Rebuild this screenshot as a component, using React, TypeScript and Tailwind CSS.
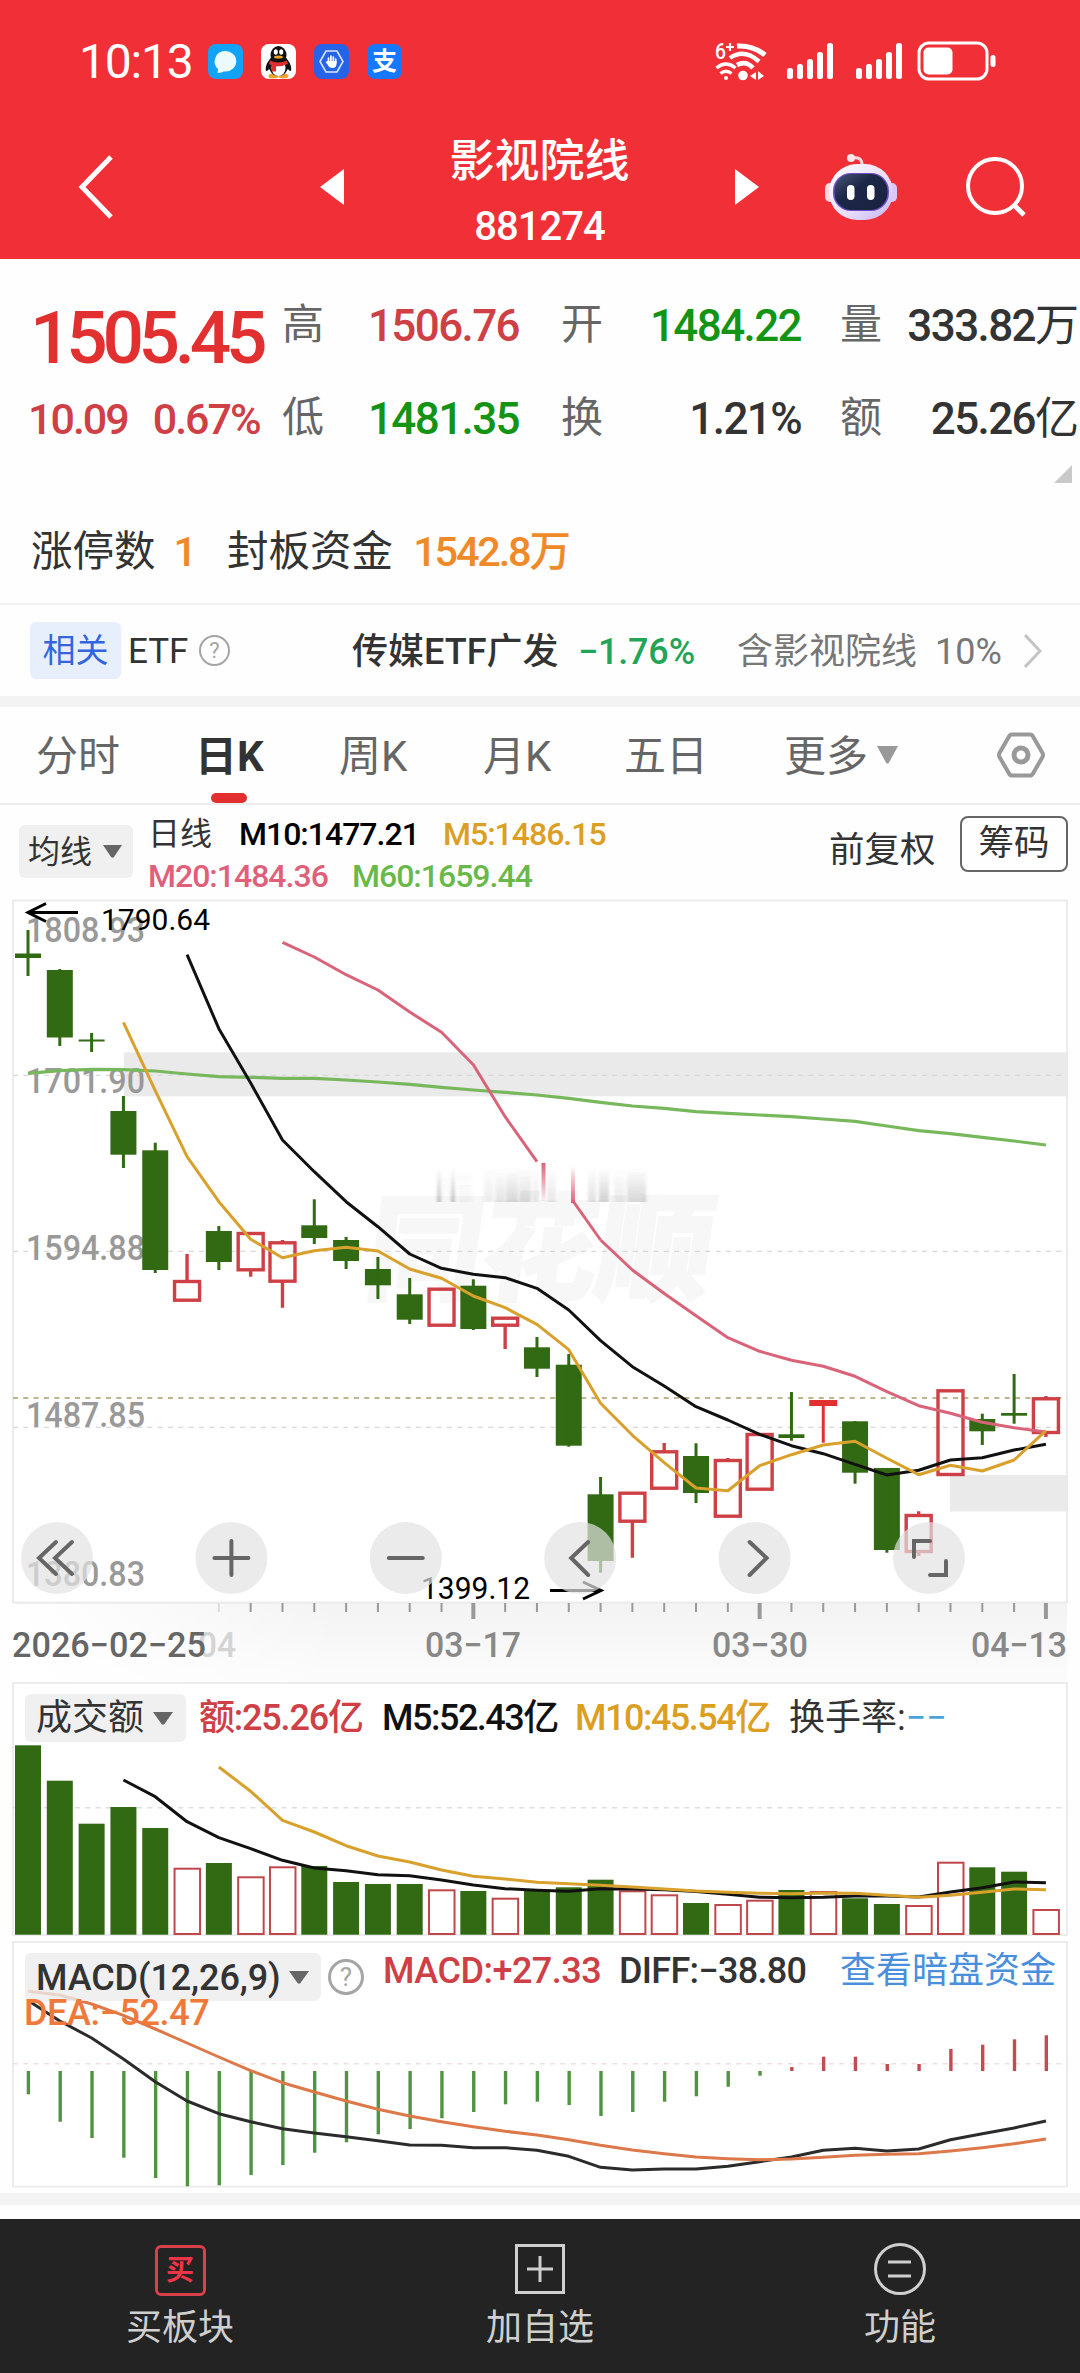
import React from "react";
import clsx from "clsx";

interface Candle {
  up?: boolean;
  solid?: boolean;
  top: number;
  bottom: number;
  high: number;
  low: number;
}

const RED = "#cf4046";
const GREEN = "#326a14";

const STEP = 31.81;
const xAt = (i: number) => 28 + i * STEP;

// [direction, body top, body bottom, high, low]
const RAW_CANDLES: [string, number, number, number, number][] = [
  ["d", 953.5, 958, 930, 976],
  ["d", 970, 1037.5, 969, 1046],
  ["d", 1039.5, 1041.5, 1033, 1052],
  ["d", 1111, 1154.7, 1096, 1168],
  ["d", 1150.3, 1270, 1142.7, 1273],
  ["u", 1280, 1301.7, 1254, 1301],
  ["d", 1231, 1262, 1226, 1270],
  ["u", 1232, 1271.3, 1232, 1276.7],
  ["u", 1241.3, 1282.7, 1240, 1307.7],
  ["d", 1225.3, 1238, 1199.3, 1244],
  ["d", 1240, 1261, 1237, 1269],
  ["d", 1269, 1285.3, 1257, 1299],
  ["d", 1294.3, 1319.7, 1278, 1324],
  ["u", 1287.7, 1326.7, 1288, 1326],
  ["d", 1285.7, 1329, 1279.3, 1330],
  ["u", 1316.7, 1326.7, 1317, 1349],
  ["d", 1347.3, 1368.7, 1337, 1377],
  ["d", 1364.7, 1445.7, 1354, 1446.7],
  ["d", 1494.3, 1561, 1477, 1572.7],
  ["u", 1491.7, 1522.7, 1492, 1557.7],
  ["u", 1450.3, 1489.7, 1443, 1489],
  ["d", 1456, 1493, 1443.3, 1503],
  ["u", 1459, 1517.7, 1458, 1517],
  ["u", 1433, 1490.7, 1433, 1490],
  ["d", 1434.3, 1438, 1392, 1440.7],
  ["s", 1400, 1406, 1400, 1442.7],
  ["d", 1421.3, 1472.7, 1421, 1483.7],
  ["d", 1468, 1550, 1468, 1552.7],
  ["u", 1514, 1553, 1511.3, 1556],
  ["u", 1389.3, 1476, 1390, 1476],
  ["d", 1419, 1431.3, 1413.7, 1445],
  ["d", 1413, 1415.7, 1374, 1423.7],
  ["u", 1397.3, 1434, 1396, 1437],
];

const CANDLES: Candle[] = RAW_CANDLES.map(([kind, top, bottom, high, low]) => ({
  up: kind !== "d",
  solid: kind === "s",
  top,
  bottom,
  high,
  low,
}));

const MA5 = [1022.3, 1090.7, 1156.7, 1201.7, 1239.3, 1257.7, 1250.7, 1247.3, 1251, 1269, 1278.3, 1296, 1307.7, 1324.3, 1349.7, 1403.3, 1435.3, 1462.7, 1488, 1490.7, 1465.7, 1454.7, 1445, 1441.3, 1458.3, 1474.7, 1465.3, 1471, 1460, 1430.7];
const MA10 = [954.7, 1028.7, 1083, 1140, 1171.7, 1201.7, 1226.7, 1254, 1268.3, 1274.3, 1277.7, 1288.3, 1310, 1340.7, 1366.7, 1386, 1406.7, 1420, 1434.3, 1445.7, 1453.7, 1464.3, 1475, 1470.3, 1460, 1457.7, 1450, 1444.3];
const MA20_LEFT = [942.3, 957, 974.7, 990, 1012, 1032.3, 1064.7, 1116.7, 1161.7];
const MA20_RIGHT = [1240, 1270, 1293.5, 1315.7, 1337.7, 1351.3, 1360.3, 1366.3, 1376.3, 1391.7, 1405.7, 1413.3, 1422.3, 1427.7, 1432];
const MA60 = [1073.3, 1070.7, 1069.3, 1069.7, 1071, 1074, 1076.7, 1077.3, 1078.3, 1078.3, 1080, 1082, 1084.3, 1087.3, 1090, 1092.3, 1095, 1098.3, 1102.3, 1106, 1108.3, 1111.7, 1113.3, 1115, 1116.7, 1119, 1121.3, 1126, 1130.7, 1133.7, 1137.3, 1141, 1145];

const VOLUME_TOPS = [1745.3, 1780.7, 1823.7, 1807, 1828, 1867.7, 1863, 1876.3, 1866.3, 1866, 1882, 1884, 1884, 1889.3, 1891, 1897.7, 1891, 1887.3, 1879.7, 1890.3, 1894.3, 1903, 1904, 1899.7, 1890, 1891, 1898.3, 1904, 1905, 1861.7, 1867.3, 1871.7, 1909];
const VOL5 = [1780, 1796.7, 1821.7, 1837.7, 1848.7, 1860.3, 1868, 1870.7, 1874.7, 1875.7, 1880, 1885, 1888.7, 1890.3, 1891.3, 1888.7, 1889, 1889.7, 1891.5, 1894.3, 1897.3, 1897.7, 1897.3, 1896, 1896, 1897, 1892, 1887.7, 1882, 1882.8];
const VOL10 = [1767, 1791.3, 1820.3, 1832, 1845.7, 1856, 1862, 1870, 1876.3, 1879, 1882.3, 1883.7, 1885.3, 1887, 1889, 1891, 1892.3, 1893.3, 1893.7, 1893, 1893.3, 1895.3, 1897.3, 1895.3, 1892.3, 1889, 1889.7];

const MACD_BASE = 2071;
const MACD_ENDS = [2094.3, 2121.7, 2138, 2157.7, 2178, 2186.3, 2185.3, 2175, 2165, 2152.7, 2142.3, 2134.3, 2129, 2118.3, 2112, 2104.3, 2101.7, 2105, 2116, 2112, 2101.7, 2096.3, 2086.7, 2075.7, 2067, 2056.7, 2056.7, 2064, 2064, 2049, 2044.7, 2039.3, 2035.3];
const DIFF = [2000.5, 2021, 2038, 2059, 2081.7, 2101, 2113.7, 2121.7, 2128.7, 2133, 2136.7, 2140.7, 2145, 2145.3, 2147.7, 2147.7, 2150.3, 2156.3, 2167.3, 2170, 2169, 2169, 2166.3, 2161.7, 2157, 2150.3, 2148.3, 2151, 2149, 2139.7, 2133.7, 2128, 2121];
const DEA = [1991.3, 1995, 2004, 2015.3, 2029, 2043, 2057, 2070.7, 2082.7, 2092, 2101, 2109.3, 2116, 2121.7, 2126.7, 2131.3, 2135, 2139.7, 2145.3, 2150, 2153.7, 2157, 2158.7, 2159.7, 2159, 2157.3, 2155.3, 2154.3, 2153.7, 2151, 2147.7, 2143.7, 2139];

const toPoints = (values: number[], from: number) =>
  values.map((y, i) => `${xAt(from + i)},${y}`).join(" ");

interface LineProps {
  values: number[];
  from: number;
  color: string;
  width?: number;
}

const Line: React.FC<LineProps> = ({ values, from, color, width = 3 }) => (
  <polyline points={toPoints(values, from)} fill="none" stroke={color} strokeWidth={width} strokeLinejoin="round" />
);

const Caret: React.FC<{ className?: string }> = ({ className = "h-[13px] w-[20px] fill-[#666]" }) => (
  <svg viewBox="0 0 20 13" preserveAspectRatio="none" className={className}>
    <path d="M0 0h20L11.5 12Q10 13.6 8.5 12z" />
  </svg>
);

const HelpIcon: React.FC<{ className?: string }> = ({ className }) => (
  <span
    className={clsx(
      "flex items-center justify-center rounded-full border-[#a5a5a5] leading-none text-[#a5a5a5]",
      className
    )}
  >
    ?
  </span>
);

const Signal: React.FC = () => (
  <svg viewBox="0 0 46 36" className="h-9 w-[46px] fill-white">
    <rect x="0" y="25" width="6" height="11" rx="2.5" />
    <rect x="10" y="21" width="6" height="15" rx="2.5" />
    <rect x="20" y="16" width="6" height="20" rx="2.5" />
    <rect x="30" y="9" width="6" height="27" rx="2.5" />
    <rect x="40" y="0" width="6" height="36" rx="2.5" />
  </svg>
);

const StatusBar: React.FC = () => (
  <div className="flex h-[122px] items-center pl-[79px]">
    <span className="w-[129px] pt-[2px] text-[48px] leading-none tracking-[-1.2px]">10:13</span>
    <div className="flex gap-[18px]">
      <svg viewBox="0 0 35 35" className="size-[35px]">
        <rect width="35" height="35" rx="8" fill="#12a3f6" />
        <path d="M17.500 7a10.500 10 0 0 1 0 20.500c-2 0-3 0-4 1l-4 .5 .5-4A10.400 10.400 0 0 1 17.500 7z" fill="#eafaff" />
      </svg>
      <svg viewBox="0 0 35 35" className="size-[35px]">
        <rect width="35" height="35" rx="8" fill="#fff" />
        <ellipse cx="12.500" cy="32" rx="5" ry="2.500" fill="#eda32c" />
        <ellipse cx="22.500" cy="32" rx="5" ry="2.500" fill="#eda32c" />
        <path d="M10 14c-4 4-6 9-5 13 2 0 3-2 3-2l19 0s1 2 3 2c1-4-1-9-5-13z" fill="#111" />
        <ellipse cx="17.500" cy="21" rx="10" ry="11" fill="#111" />
        <ellipse cx="17.500" cy="24" rx="7" ry="8" fill="#fff" />
        <ellipse cx="17.500" cy="11" rx="8" ry="9" fill="#111" />
        <ellipse cx="14.800" cy="8" rx="2" ry="2.800" fill="#fff" />
        <ellipse cx="20.200" cy="8" rx="2" ry="2.800" fill="#fff" />
        <ellipse cx="17.500" cy="13" rx="4.500" ry="1.600" fill="#f0a52a" />
        <path d="M9 16.500q8.500 4 17 0l1 3.500q-6 2.500-12 2.500v5h-4v-6l-3-1.500z" fill="#dd3030" />
      </svg>
      <svg viewBox="0 0 35 35" className="size-[35px]">
        <rect width="35" height="35" rx="8" fill="#2563e8" />
        <path d="M12 7h11l6 10.500L23 28H12L6 17.500z" fill="none" stroke="#dce8ff" strokeWidth="1.600" />
        <path d="M14.500 18v-4m2.400 4v-6m2.400 6v-5m2.400 6v-4" stroke="#fff" strokeWidth="1.700" strokeLinecap="round" />
        <path d="M13.700 17h8.800v3q0 4-4.300 4-3 0-4.700-3.500l-2-2.500z" fill="#fff" />
      </svg>
      <span className="flex size-[35px] items-center justify-center rounded-lg bg-[#1677ff] text-[25px] leading-none font-bold">
        支
      </span>
    </div>
    <svg viewBox="0 0 52 40" className="ml-[313px] h-10 w-[52px] fill-none stroke-white">
      <text x="0" y="18" fontSize="22" fontWeight="500" fill="#fff" stroke="none" textLength="11" lengthAdjust="spacingAndGlyphs">6</text>
      <path d="M11 6h8M15 2v8" strokeWidth="2.200" />
      <path d="M22 5q16-1 28 9" strokeWidth="5" />
      <path d="M15 17q14-10 29 3.500" strokeWidth="4.500" />
      <path d="M22 24q9-5 16 3" strokeWidth="4.500" />
      <path d="M1.500 27q9.500-8 19 0M5.500 32.500q5.500-4.500 11 0" strokeWidth="3.400" />
      <circle cx="11" cy="37" r="2" fill="#fff" stroke="none" />
      <circle cx="28" cy="34.500" r="4.800" fill="#fff" stroke="none" />
      <path d="M35 35l6-4v8zM43 30l6 5-6 4z" fill="#fff" stroke="none" />
    </svg>
    <div className="ml-5 flex gap-[23px]">
      <Signal />
      <Signal />
    </div>
    <svg viewBox="0 0 80 40" className="ml-[15px] h-10 w-20">
      <rect x="2" y="2" width="68" height="36" rx="10" fill="none" stroke="#fff" strokeWidth="3" />
      <rect x="6.500" y="6.500" width="29" height="27" rx="5" fill="#fff" />
      <rect x="73.500" y="14" width="5" height="12" rx="2.500" fill="#fff" />
    </svg>
  </div>
);

const TitleBar: React.FC = () => (
  <div className="flex h-[137px] items-center pb-[7px] pl-[78px]">
    <svg viewBox="0 0 35 64" className="h-16 w-[35px] fill-none stroke-white" strokeWidth="5">
      <path d="M33 2L4 32l29 30" />
    </svg>
    <svg viewBox="0 0 24 36" className="ml-[207px] h-9 w-6 fill-white">
      <path d="M24 0v36L0 18z" />
    </svg>
    <div className="flex w-[391px] flex-col items-center pt-[13px]">
      <h1 className="text-[45px] leading-[65px] font-medium">影视院线</h1>
      <span className="text-[40px] leading-[65px] font-medium tracking-[-1px]">881274</span>
    </div>
    <svg viewBox="0 0 24 36" className="h-9 w-6 fill-white">
      <path d="M0 0v36l24-18z" />
    </svg>
    <svg viewBox="0 0 74 68" className="ml-[65px] h-[68px] w-[74px]">
      <defs>
        <linearGradient id="shell" x1="0" y1="0" x2="1" y2="1">
          <stop offset="0" stopColor="#fff" />
          <stop offset="0.6" stopColor="#e8dcfb" />
          <stop offset="1" stopColor="#c3b4f2" />
        </linearGradient>
        <linearGradient id="visor" x1="0" y1="0" x2="1" y2="1">
          <stop offset="0" stopColor="#4a5476" />
          <stop offset="0.4" stopColor="#1d2747" />
          <stop offset="1" stopColor="#1b2240" />
        </linearGradient>
      </defs>
      <path d="M28 5q10-2 10 7" fill="none" stroke="#ffd5dc" strokeWidth="3" />
      <circle cx="27" cy="5" r="4" fill="#ffe6ea" />
      <rect x="1" y="30" width="12" height="19" rx="5" fill="#fbd9e2" />
      <rect x="61" y="30" width="12" height="19" rx="5" fill="#dcc6f5" />
      <rect x="5" y="11" width="64" height="56" rx="28" fill="url(#shell)" />
      <rect x="9" y="20" width="56" height="38" rx="18" fill="#6b4fc4" />
      <rect x="10.500" y="21" width="53" height="36" rx="17" fill="url(#visor)" />
      <rect x="23" y="32" width="7.500" height="15" rx="3.700" fill="#fff" />
      <rect x="43" y="32" width="7.500" height="15" rx="3.700" fill="#fff" />
    </svg>
    <svg viewBox="0 0 61 60" className="ml-[68px] h-[60px] w-[61px] fill-none stroke-white" strokeWidth="4">
      <circle cx="29" cy="29" r="27" />
      <path d="M48 48l10 10" strokeWidth="5" />
    </svg>
  </div>
);

interface QuoteCellProps {
  label: string;
  value: string;
  unit?: string;
  className: string;
}

const QuoteCell: React.FC<QuoteCellProps> = ({ label, value, unit, className }) => (
  <>
    <span className="text-[42px] leading-none tracking-normal text-[#666]">{label}</span>
    <span
      className={clsx(
        "pt-[2px] text-right text-[44px] leading-none font-medium tracking-[-1.6px] whitespace-nowrap",
        className
      )}
    >
      {value}
      {unit && <span className="font-normal tracking-normal">{unit}</span>}
    </span>
  </>
);

const QuotePanel: React.FC = () => (
  <section className="h-[346px] border-b-2 border-[#f2f2f2] pt-[19px]">
    <div className="grid h-[187px] grid-cols-[254px_42px_195px_42px_42px_198px_39px_42px_197px] grid-rows-2 items-center pl-[28px]">
      <span className="pt-[28px] pl-[2px] text-[73px] leading-none font-medium tracking-[-5.300px] text-[#e23030]">
        1505.45
      </span>
      <QuoteCell label="高" value="1506.76" className="text-[#cf4046]" />
      <span />
      <QuoteCell label="开" value="1484.22" className="text-[#149414]" />
      <span />
      <QuoteCell label="量" value="333.82" unit="万" className="text-[#333]" />
      <div className="flex gap-[25px] pt-[3px] text-[43px] leading-none font-medium tracking-[-2px] text-[#cf4046]">
        <span>10.09</span>
        <span>0.67%</span>
      </div>
      <QuoteCell label="低" value="1481.35" className="text-[#149414]" />
      <span />
      <QuoteCell label="换" value="1.21%" className="text-[#333]" />
      <span />
      <QuoteCell label="额" value="25.26" unit="亿" className="text-[#333]" />
    </div>
    <svg viewBox="0 0 18 18" className="ml-[1054px] size-[18px] fill-[#c9c9c9]">
      <path d="M18 0v18H0z" />
    </svg>
    <div className="flex h-[138px] items-center pl-[31px] text-[41.500px] leading-none text-[#333]">
      <span>涨停数</span>
      <span className="ml-[18px] font-medium text-[#f08a28]">1</span>
      <span className="ml-[30px]">封板资金</span>
      <span className="ml-[20px] font-medium text-[#f08a28]">
        <span className="tracking-[-2.200px]">1542.8</span>万
      </span>
    </div>
  </section>
);

const EtfRow: React.FC = () => (
  <section className="flex h-[91px] items-center pl-[30px] text-[34px] leading-none text-[#333]">
    <span className="flex h-[57px] w-[91px] items-center justify-center rounded-md bg-[#e8effc] text-[33px] text-[#3366dd]">
      相关
    </span>
    <span className="ml-[7px] w-[71px] pt-[2px] text-[35px]">ETF</span>
    <HelpIcon className="size-[31px] border-2 text-[22px]" />
    <span className="ml-[122px] w-[226px] pt-[2px] text-[36px] font-medium whitespace-nowrap">传媒ETF广发</span>
    <span className="w-[159px] pt-[2px] text-[36px] font-medium tracking-[-0.200px] text-[#22a559]">−1.76%</span>
    <span className="w-[198px] pt-[2px] text-[36px] whitespace-nowrap text-[#777]">含影视院线</span>
    <span className="w-[89px] pt-[2px] text-[36px] text-[#777]">10%</span>
    <svg viewBox="0 0 18 34" className="h-[34px] w-[18px] fill-none stroke-[#c4c4c4]" strokeWidth="3">
      <path d="M1 1l15 16L1 33" />
    </svg>
  </section>
);

const PERIOD_TABS = [
  { label: "分时", className: "w-[159px]" },
  { label: "日K", className: "w-[144px]" },
  { label: "周K", className: "w-[144px]" },
  { label: "月K", className: "w-[141px]" },
  { label: "五日", className: "w-[160px]" },
  { label: "更多", className: "w-[93px]" },
];

const PeriodTabs: React.FC = () => (
  <nav className="flex h-[98px] items-center border-b-2 border-[#ececec] pl-[36px] text-[42px] leading-none text-[#666]">
    {PERIOD_TABS.map((tab) => {
      const active = tab.label === "日K";
      return (
        <span
          key={tab.label}
          className={clsx("relative flex h-full items-center pt-[3px]", tab.className, active && "font-bold text-[#333]")}
        >
          {tab.label}
          {active && <i className="absolute bottom-0 left-[16px] h-[10px] w-9 rounded-full bg-[#e23030]" />}
        </span>
      );
    })}
    <Caret className="h-[18px] w-[21px] fill-[#999]" />
    <svg viewBox="0 0 50 46" className="ml-[98px] h-[46px] w-[50px] fill-none stroke-[#999]" strokeWidth="4">
      <path d="M16 2.500h18q2 0 3 2l9.500 16.500q1 2 0 4L37 41.500q-1 2-3 2H16q-2 0-3-2L3.500 25q-1-2 0-4L13 4.500q1-2 3-2z" />
      <circle cx="25" cy="23" r="7" strokeWidth="5" />
    </svg>
  </nav>
);

const IndicatorBar: React.FC = () => (
  <div className="flex h-[94px] pl-[19px] text-[32px] leading-none text-[#333]">
    <div className="mt-5 flex h-[53px] w-[114px] items-center rounded-md bg-[#f0f0f0] pl-[9px]">
      均线
      <Caret className="ml-[11px] h-[13px] w-[19px] fill-[#666]" />
    </div>
    <div className="ml-[15px] flex w-[681px] flex-col">
      <div className="mt-3 flex h-[34px] items-center tracking-[-1px] font-medium">
        <span className="w-[91px] font-normal tracking-normal">日线</span>
        <span className="w-[204px] text-black">M10:1477.21</span>
        <span className="text-[#dc9f22]">M5:1486.15</span>
      </div>
      <div className="mt-[8px] flex h-[34px] items-center tracking-[-1px] font-medium">
        <span className="w-[204px] text-[#e0607a]">M20:1484.36</span>
        <span className="text-[#69b84a]">M60:1659.44</span>
      </div>
    </div>
    <span className="mt-[28px] w-[131px] text-[35.500px]">前复权</span>
    <span className="mt-[11px] flex h-[56px] w-[108px] items-center justify-center rounded-lg border-2 border-[#666] text-[35.500px]">
      筹码
    </span>
  </div>
);

interface ChartTextProps {
  x: number;
  y: number;
  size: number;
  width: number;
  fill: string;
  weight?: number;
  children: string;
}

const ChartText: React.FC<ChartTextProps> = ({ x, y, size, width, fill, weight = 400, children }) => (
  <text x={x} y={y} fontSize={size} textLength={width} lengthAdjust="spacingAndGlyphs" fill={fill} fontWeight={weight}>
    {children}
  </text>
);

const CandleMark: React.FC<{ candle: Candle; x: number }> = ({ candle, x }) => {
  const { up, solid, top, bottom, high, low } = candle;
  if (up && !solid) {
    return (
      <g stroke={RED} strokeWidth="3.400" fill="none">
        <path d={`M${x} ${high}V${top + 1}M${x} ${bottom - 1}V${Math.max(low, bottom - 1)}`} />
        <rect x={x - 12.5} y={top + 1.5} width="25" height={bottom - top - 3} />
      </g>
    );
  }
  const color = solid ? "#e23030" : GREEN;
  return (
    <g fill={color}>
      <rect x={x - (solid ? 14 : 13)} y={top} width={solid ? 28 : 26} height={bottom - top} />
      <rect x={x - 1.5} y={high} width="3" height={low - high} />
    </g>
  );
};

const CHART_BUTTONS = [
  "M-1-16l-17 16 17 16M15-16L-2 0l17 16",
  "M-17 0h34M0-17v34",
  "M-17 0h34",
  "M8-16L-9 0 8 17",
  "M-5-16L12 0-5 17",
  "M-15-1v-16h16M17 3v14H1",
];

const GLITCH = [
  { x: 437, w: 4, o: 0.34 },
  { x: 441, w: 10, o: 0.02 },
  { x: 451, w: 4, o: 0.34 },
  { x: 458, w: 14, o: 0.05 },
  { x: 484, w: 9, o: 0.12 },
  { x: 495, w: 10, o: 0.16 },
  { x: 506, w: 12, o: 0.24 },
  { x: 519, w: 12, o: 0.2 },
  { x: 533, w: 6, o: 0.12 },
  { x: 547, w: 9, o: 0.14 },
  { x: 588, w: 8, o: 0.18 },
  { x: 599, w: 10, o: 0.28 },
  { x: 614, w: 11, o: 0.13 },
  { x: 627, w: 19, o: 0.24 },
];

const PriceChart: React.FC = () => (
  <div className="h-[783px]">
    <svg viewBox="0 899 1080 783" className="block h-[783px] w-[1080px]">
      <defs>
        <linearGradient id="axisFade" x1="0" x2="0" y1="0" y2="1">
          <stop offset="0" stopColor="#f3f3f3" />
          <stop offset="1" stopColor="#fcfcfc" />
        </linearGradient>
        <linearGradient id="axisLeft">
          <stop offset="0" stopColor="#fff" />
          <stop offset="1" stopColor="#fff" stopOpacity="0" />
        </linearGradient>
        <linearGradient id="smear" x1="0" x2="0" y1="0" y2="1">
          <stop offset="0" stopColor="#555" stopOpacity="0" />
          <stop offset="1" stopColor="#555" />
        </linearGradient>
        <linearGradient id="pinkDown" x1="0" x2="0" y1="0" y2="1">
          <stop offset="0" stopColor="#d96379" />
          <stop offset="1" stopColor="#d96379" stopOpacity="0.1" />
        </linearGradient>
        <linearGradient id="pinkUp" x1="0" x2="0" y1="0" y2="1">
          <stop offset="0" stopColor="#d96379" stopOpacity="0" />
          <stop offset="1" stopColor="#d96379" />
        </linearGradient>
        <filter id="soft">
          <feGaussianBlur stdDeviation="1.8 0.5" />
        </filter>
      </defs>

      <rect x="13" y="1603" width="1054" height="80" fill="url(#axisFade)" />
      <rect x="13" y="1604" width="330" height="79" fill="url(#axisLeft)" />
      <rect x="13" y="900.500" width="1054" height="702" fill="#fff" stroke="#ececec" strokeWidth="2" />

      <text
        transform="translate(362 1291) skewX(-8)"
        fontSize="116"
        fontWeight="900"
        textLength="346"
        fill="#f7f7f7"
        stroke="#f7f7f7"
        strokeWidth="2"
      >
        同花顺
      </text>
      <g filter="url(#soft)">
        {GLITCH.map((g) => (
          <rect key={g.x} x={g.x} y="1168" width={g.w} height="34" fill="url(#smear)" opacity={g.o} />
        ))}
      </g>

      <rect x="124" y="1052.300" width="944" height="44" fill="#eaeaea" />
      <rect x="950" y="1475" width="118" height="36.500" fill="#eaeaea" />
      <g stroke="#d8d8d8" strokeWidth="1.300" strokeDasharray="5 5.330">
        <path d="M13 1075.300H1067M13 1251.300H1067M13 1427.300H1067" />
      </g>
      <path d="M13 1398H1067" stroke="#a79d68" strokeWidth="1.700" strokeDasharray="5 5.330" />

      <ChartText x={26} y={942} size={35} width={119} fill="#999" weight={500}>1808.93</ChartText>
      <ChartText x={26} y={1093} size={35} width={119} fill="#999" weight={500}>1701.90</ChartText>
      <ChartText x={26} y={1260} size={35} width={119} fill="#999" weight={500}>1594.88</ChartText>
      <ChartText x={26} y={1427} size={35} width={119} fill="#999" weight={500}>1487.85</ChartText>
      <ChartText x={26} y={1586} size={35} width={119} fill="#999" weight={500}>1380.83</ChartText>

      {CANDLES.map((candle, i) => (
        <CandleMark key={i} candle={candle} x={xAt(i)} />
      ))}

      <Line values={MA60} from={0} color="#77b85c" width={3.2} />
      <Line values={MA20_LEFT} from={8} color="#d96379" />
      <rect x="541.500" y="1163" width="4" height="38" fill="url(#pinkDown)" />
      <rect x="571" y="1166" width="4" height="37" fill="url(#pinkUp)" />
      <path d={`M573 1201L${xAt(18)} 1240`} stroke="#d96379" strokeWidth="3" />
      <Line values={MA20_RIGHT} from={18} color="#d96379" />
      <Line values={MA10} from={5} color="#111" />
      <Line values={MA5} from={3} color="#d9a02c" />

      <path d="M78 912.500H28M46 903.500l-18 9 18 9" fill="none" stroke="#000" strokeWidth="3" />
      <ChartText x={101} y={930} size={30} width={109} fill="#000">1790.64</ChartText>
      <path d="M550 1590.500h51M583 1582l18 8.500-18 8.500" fill="none" stroke="#000" strokeWidth="3" />
      <ChartText x={421} y={1599} size={31} width={109} fill="#000">1399.12</ChartText>

      {CHART_BUTTONS.map((d, i) => (
        <g key={d} transform={`translate(${57 + i * 174.4} 1558)`}>
          <circle r="36" fill="#e2e2e2" fillOpacity="0.7" />
          <path d={d} fill="none" stroke="#666" strokeWidth="4" strokeLinecap="round" />
        </g>
      ))}

      {CANDLES.map((_, i) => {
        if (i < 6) return null;
        const major = i === 14 || i === 23 || i === 32;
        return (
          <rect
            key={i}
            x={xAt(i) - (major ? 2 : 1)}
            y="1603"
            width={major ? 4 : 2}
            height={major ? 16 : 9}
            fill={i === 6 ? "#ddd" : "#999"}
          />
        );
      })}
      <ChartText x={198} y={1657} size={35} width={38} fill="#d4d4d4" weight={500}>04</ChartText>
      <ChartText x={12} y={1657} size={35} width={194} fill="#666" weight={500}>2026−02−25</ChartText>
      <ChartText x={425} y={1657} size={35} width={96} fill="#888" weight={500}>03−17</ChartText>
      <ChartText x={712} y={1657} size={35} width={96} fill="#888" weight={500}>03−30</ChartText>
      <ChartText x={971} y={1657} size={35} width={96} fill="#888" weight={500}>04−13</ChartText>
    </svg>
  </div>
);

const VolumePane: React.FC = () => (
  <div className="relative h-[259px]">
    <svg viewBox="0 1682 1080 259" className="absolute inset-0 h-[259px] w-[1080px]">
      <rect x="13" y="1683" width="1054" height="252" fill="#fff" stroke="#ececec" strokeWidth="2" />
      <path d="M13 1807.700H1067" stroke="#dedede" strokeWidth="1.400" strokeDasharray="5 5.330" />
      {VOLUME_TOPS.map((top, i) =>
        CANDLES[i].up ? (
          <rect key={i} x={xAt(i) - 12.5} y={top + 1} width="25.500" height={1934 - top - 1} fill="#fff" stroke="#c0474c" strokeWidth="2" />
        ) : (
          <rect key={i} x={xAt(i) - 13} y={top} width="26" height={1934.7 - top} fill={GREEN} />
        )
      )}
      <Line values={VOL5} from={3} color="#111" />
      <Line values={VOL10} from={6} color="#d9a02c" />
    </svg>
    <div className="relative flex h-[60px] items-center pt-[12px] pl-[25px] text-[36px] leading-none whitespace-nowrap">
      <span className="flex h-[48px] w-[161px] items-center rounded-md bg-[#f0f0f0] pl-[11px] text-[#333]">
        成交额
        <Caret className="ml-[9px] h-[13px] w-[20px] fill-[#666]" />
      </span>
      <span className="ml-[13px] w-[183px] font-medium tracking-[-1.200px] text-[#cf4046]">额:25.26亿</span>
      <span className="w-[193px] font-medium tracking-[-1.500px] text-[#111]">M5:52.43亿</span>
      <span className="w-[214px] font-medium tracking-[-1.500px] text-[#dc9f22]">M10:45.54亿</span>
      <span className="text-[#333]">换手率:</span>
      <span className="text-[#4aa3d8]">−−</span>
    </div>
  </div>
);

const MacdPane: React.FC = () => (
  <div className="relative h-[252px]">
    <svg viewBox="0 1941 1080 252" className="absolute inset-0 h-[252px] w-[1080px]">
      <rect x="13" y="1942" width="1054" height="244.500" fill="#fff" stroke="#ececec" strokeWidth="2" />
      <path d="M13 2063.700H1067" stroke="#efdfe3" strokeWidth="1.400" strokeDasharray="5 5.330" />
      {MACD_ENDS.map((end, i) => (
        <path
          key={i}
          d={`M${xAt(i) + 0.4} ${MACD_BASE}V${end}`}
          stroke={end > MACD_BASE ? "#4f9440" : "#c24c50"}
          strokeWidth="3.400"
        />
      ))}
      <Line values={DIFF} from={0} color="#2b2b2b" />
      <Line values={DEA} from={0} color="#dc7849" />
    </svg>
    <div className="relative flex pt-3 pl-[25px] text-[36px] leading-none whitespace-nowrap">
      <span className="flex h-[48px] w-[296px] items-center rounded-md bg-[#ececec]/80 pl-[11px] text-[#333]">
        <span className="w-[253px] pt-[2px] font-medium tracking-[-0.100px]">MACD(12,26,9)</span>
        <Caret />
      </span>
      <HelpIcon className="mt-[6px] ml-[7px] size-9 border-[3px] text-[26px]" />
      <span className="ml-[19px] w-[236px] font-medium tracking-[-0.500px] text-[#cf4046]">MACD:+27.33</span>
      <span className="w-[221px] font-medium tracking-[-0.700px] text-[#333]">DIFF:−38.80</span>
      <span className="text-[36px]  text-[#4a8fdc]">查看暗盘资金</span>
    </div>
    <div className="relative -mt-[6px] pl-[24px] text-[36px] leading-none font-medium tracking-[-0.400px] text-[#f07838]">DEA:−52.47</div>
  </div>
);

const BottomNav: React.FC = () => (
  <nav className="grid h-[154px] grid-cols-3 bg-[#232323] text-[36px] leading-none text-[#cfcfcf]">
    <div className="flex flex-col items-center pt-[26px]">
      <span className="flex size-[51px] items-center justify-center rounded-md border-[3px] border-[#d8404a] text-[28px] font-bold text-[#ee3548]">
        买
      </span>
      <span className="mt-[14px]">买板块</span>
    </div>
    <div className="flex flex-col items-center pt-[25px]">
      <svg viewBox="0 0 50 50" className="size-[50px] fill-none stroke-[#cfcfcf]" strokeWidth="3">
        <rect x="1.500" y="1.500" width="47" height="47" />
        <path d="M12 25h26M25 12v26" />
      </svg>
      <span className="mt-[16px]">加自选</span>
    </div>
    <div className="flex flex-col items-center pt-[24px]">
      <svg viewBox="0 0 52 52" className="size-[52px] fill-none stroke-[#cfcfcf]" strokeWidth="3">
        <circle cx="26" cy="26" r="24.500" />
        <path d="M14 19h23M14 33h23" />
      </svg>
      <span className="mt-[15px]">功能</span>
    </div>
  </nav>
);

const App: React.FC = () => {
  return (
    <main className="w-[1080px] overflow-hidden bg-[#fefefe] font-[Roboto,'Noto_Sans_CJK_SC',sans-serif]">
      <header className="h-[259px] bg-[#f03036] text-white">
        <StatusBar />
        <TitleBar />
      </header>
      <QuotePanel />
      <EtfRow />
      <div className="h-[11px] bg-[#f3f3f3]" />
      <PeriodTabs />
      <IndicatorBar />
      <PriceChart />
      <VolumePane />
      <MacdPane />
      <div className="h-3 bg-[#f3f3f3]" />
      <div className="h-[14px]" />
      <BottomNav />
    </main>
  );
};

export default App;
